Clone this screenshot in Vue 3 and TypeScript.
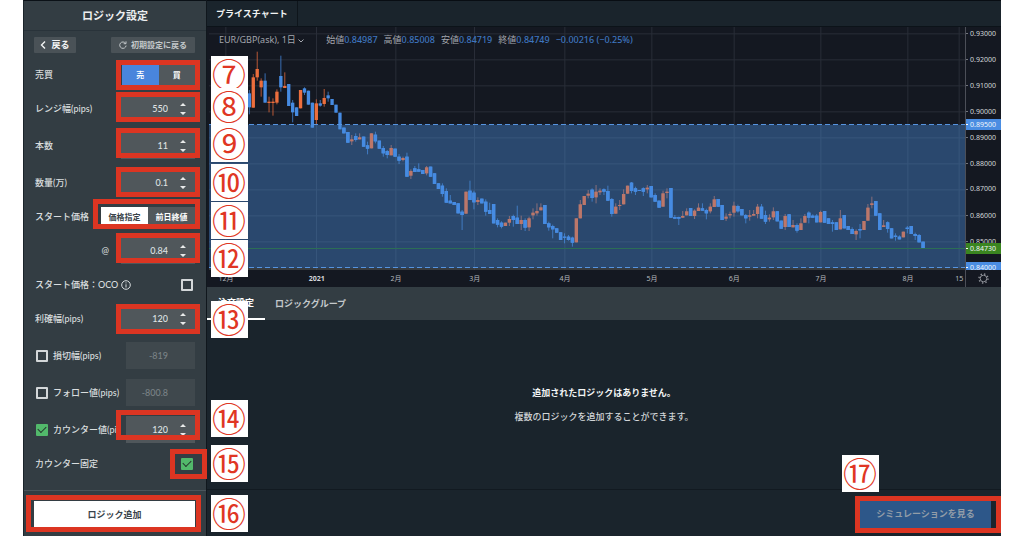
<script setup lang="ts">
import { ref } from 'vue'

type Candle = { x: number; up: boolean; top: number; height: number; high: number; low: number }

const side = ref<'sell' | 'buy'>('sell')
const startMode = ref<'price' | 'close'>('price')
const range = ref('550')
const count = ref('11')
const amount = ref('0.1')
const startPrice = ref('0.84')
const profit = ref('120')
const lossCut = ref('-819')
const follow = ref('-800.8')
const counter = ref('120')
const oco = ref(false)
const useLossCut = ref(false)
const useFollow = ref(false)
const useCounter = ref(true)
const counterFixed = ref(true)

// Plot units: three per pixel. Each candle is direction, body top, body bottom, then optional high and low.
const plot = { left: 12, top: 81, width: 2268, height: 729 }
const series = `
d280,322,270,343 u232,323,222 u207,232,155,242 u242,262,235,290 d242,308,220 u305,309,290,337 u305,309,295,347 u275,308,268,313
d228,262,167,275 u258,264,217 d252,318 d308,337,300,367 d322,348 u270,325 d265,278,262,285 d272,314 d308,383 u310,360,298,375
d310,317,300,320 u294,312,267,320 d286,295,275,305 d297,315 d314,338 d338,388 d383,400 d396,428 u418,424,405,435 d408,420,400,425
u412,418,400 d410,440 d436,446,425,463 u400,445 d404,424,395,430 d422,446 d444,460,438,470 d453,465,450,475 u444,466,435 d446,470
d470,482,462,492 u474,480,470,484 d470,530,458 u513,527,508,537 d505,516,498 d508,515,490 d510,522 u502,520,498,526 d500,530
d520,552 d550,567 d557,582,550,590 d573,608,565 d602,610,585 d606,615 d610,640 d635,645,630,690 u575,641 d572,600,542 d578,607,572,628
u600,606,592,615 d596,610 d605,635,598,647 d630,642,608 d612,670 d660,674,655,682 d668,680,664,685 u668,678 u657,668,648,678 d648,660,644,680
d653,672,617 u660,672,647,690 d660,683,655,693 u655,682,650,693 u638,646,625,658 u633,640,610,647 u622,631,610 d615,672 d670,682,665,692
d678,688,674,715 d685,698 d697,720 d710,713,700,730 d710,720,705,722 d713,728,710,740 u655,727 u613,655,600 u588,615 u581,587,570,595
d569,594,565,605 u575,592,555,610 u572,577,565,585 d568,575,565,585 d573,602,557 d597,642,594,650 u620,641,610 u615,618,600,630
u582,613,568 u557,581 d548,573,546,580 d565,575,560,585 d570,573 d565,575,562,588 u563,568,555,580 d558,592 d585,605,580 d602,623
u580,620,572 u575,579,565,595 d564,653 d651,656,645 d651,656,650,675 u648,653,633 u634,646,625 d624,648 u632,648,628,657 u623,633,610
d625,632,610 d630,640,626,658 u620,634,610,640 u598,621,588 d597,620 d615,660 u650,656,640,663 u642,646,635,655 u617,638,605,650
d618,634,614,638 d627,646 d645,655,642,670 u646,650,630,662 u642,647,630 u620,642,612,655 d620,656,612 d645,665,632,672 u653,658,643,665
u634,652,622,660 d634,664 d662,686 u648,681,642,690 d643,681 u675,682,660 d675,692,670,698 u670,690,655 u648,668,642 d638,653,634,670
d647,653,643 d647,667,642 u636,667,632 d633,668 d655,672 d667,672,660,695 d667,690 u655,688,630 d645,685 d678,690 d687,702,682
u693,703,688,720 d687,691,672,715 u663,690 u623,662,612 u610,615,590,625 d603,647 d640,690 u676,681,660 d667,687,664,698 d685,715
d707,711,700,722 d710,718,706 u695,712 d683,687,678,700 d678,702 d702,708,698,720 d705,727,702 d725,746`
const candles: Candle[] = series.trim().split(/\s+/).map((entry, index) => {
  const [top, bottom, high = top, low = bottom] = entry.slice(1).split(',').map(Number)
  return { x: 133 + index * 11.82, up: entry[0] === 'u', top, height: bottom - top, high, low }
})

const prices = ['0.93000', '0.92000', '0.91000', '0.90000', '0.89000', '0.88000', '0.87000', '0.86000', '0.85000']
const priceY = (value: number) => 102 + (0.93 - value) * 7800
const priceTop = (value: number) => ({ top: `${((priceY(value) - plot.top) / plot.height) * 100}%` })
const months = [
  { x: 63, text: '12月' }, { x: 335, text: '2021', strong: true }, { x: 573, text: '2月' }, { x: 809, text: '3月' },
  { x: 1080, text: '4月' }, { x: 1341, text: '5月' }, { x: 1588, text: '6月' }, { x: 1848, text: '7月' },
  { x: 2109, text: '8月' }, { x: 2263, text: '15' },
]
const monthLeft = (x: number) => ({ left: `${((x - plot.left) / plot.width) * 100}%` })

const tags = [
  { value: 0.895, text: '0.89500', kind: 'level' },
  { value: 0.84, text: '0.84000', kind: 'level' },
  { value: 0.8473, text: '0.84730', kind: 'current' },
]

const frames = [
  { left: 93, top: 60, width: 84, height: 30 },
  { left: 93, top: 92, width: 84, height: 30 },
  { left: 93, top: 128, width: 84, height: 30 },
  { left: 93, top: 167, width: 84, height: 30 },
  { left: 70, top: 199, width: 107, height: 30 },
  { left: 93, top: 233, width: 84, height: 30 },
  { left: 93, top: 304, width: 84, height: 30 },
  { left: 93, top: 410, width: 84, height: 30 },
  { left: 147, top: 449, width: 37, height: 30 },
  { left: 3, top: 495, width: 175, height: 37 },
]
const marks = [
  { text: '⑦', top: 56 }, { text: '⑧', top: 88 }, { text: '⑨', top: 125 }, { text: '⑩', top: 164 },
  { text: '⑪', top: 202 }, { text: '⑫', top: 240 }, { text: '⑬', top: 301 }, { text: '⑭', top: 400 },
  { text: '⑮', top: 445 }, { text: '⑯', top: 495 },
]
const px = (box: Record<string, number>) =>
  Object.fromEntries(Object.entries(box).map(([key, value]) => [key, `${value}px`]))
</script>

<template>
  <div class="app">
    <aside class="sidebar">
      <h1 class="title">ロジック設定</h1>
      <div class="toolbar">
        <button type="button" class="tool back">
          <svg width="6" height="8" viewBox="0 0 6 8"><path d="M5 .5 1.5 4 5 7.5" /></svg>戻る
        </button>
        <button type="button" class="tool reset">
          <svg width="8" height="8" viewBox="0 0 8 8"><path d="M6.6 2.4A3.2 3.2 0 1 0 7.1 4.6M7 .4V2.7H4.7" /></svg>初期設定に戻る
        </button>
      </div>

      <div class="row short">
        <span>売買</span>
        <div class="toggle">
          <button type="button" :class="{ sell: side === 'sell' }" @click="side = 'sell'">売</button>
          <button type="button" :class="{ sell: side === 'buy' }" @click="side = 'buy'">買</button>
        </div>
      </div>
      <div class="row">
        <label for="range">レンジ幅(pips)</label>
        <div class="number"><input id="range" v-model="range" type="number" step="any" /><svg width="6" height="12" viewBox="0 0 6 12"><path d="M0 3 3 0 6 3ZM0 9 3 12 6 9Z" /></svg></div>
      </div>
      <div class="row">
        <label for="count">本数</label>
        <div class="number"><input id="count" v-model="count" type="number" /><svg width="6" height="12" viewBox="0 0 6 12"><path d="M0 3 3 0 6 3ZM0 9 3 12 6 9Z" /></svg></div>
      </div>
      <div class="row">
        <label for="amount">数量(万)</label>
        <div class="number"><input id="amount" v-model="amount" type="number" step="any" /><svg width="6" height="12" viewBox="0 0 6 12"><path d="M0 3 3 0 6 3ZM0 9 3 12 6 9Z" /></svg></div>
      </div>
      <div class="row short">
        <span>スタート価格</span>
        <div class="toggle wide">
          <button type="button" :class="{ picked: startMode === 'price' }" @click="startMode = 'price'">価格指定</button>
          <button type="button" :class="{ picked: startMode === 'close' }" @click="startMode = 'close'">前日終値</button>
        </div>
      </div>
      <div class="row at">
        <label for="start">@</label>
        <div class="number"><input id="start" v-model="startPrice" type="number" step="any" /><svg width="6" height="12" viewBox="0 0 6 12"><path d="M0 3 3 0 6 3ZM0 9 3 12 6 9Z" /></svg></div>
      </div>
      <div class="row short">
        <label for="oco" class="info">スタート価格：OCO
          <svg width="10" height="10" viewBox="0 0 10 10"><circle cx="5" cy="5" r="4.3" /><path d="M5 4.3V7.5M5 2.4V3.4" /></svg>
        </label>
        <input id="oco" v-model="oco" type="checkbox" class="check edge" />
      </div>
      <div class="row">
        <label for="profit">利確幅(pips)</label>
        <div class="number"><input id="profit" v-model="profit" type="number" step="any" /><svg width="6" height="12" viewBox="0 0 6 12"><path d="M0 3 3 0 6 3ZM0 9 3 12 6 9Z" /></svg></div>
      </div>
      <div class="row">
        <label class="option"><input v-model="useLossCut" type="checkbox" class="check" />損切幅(pips)</label>
        <div class="number small off"><input v-model="lossCut" type="number" step="any" :disabled="!useLossCut" aria-label="損切幅(pips)" /></div>
      </div>
      <div class="row">
        <label class="option"><input v-model="useFollow" type="checkbox" class="check" />フォロー値(pips)</label>
        <div class="number small off"><input v-model="follow" type="number" step="any" :disabled="!useFollow" aria-label="フォロー値(pips)" /></div>
      </div>
      <div class="row">
        <label class="option"><input v-model="useCounter" type="checkbox" class="check" />カウンター値(pips)</label>
        <div class="number small"><input v-model="counter" type="number" step="any" :disabled="!useCounter" aria-label="カウンター値(pips)" /><svg width="6" height="12" viewBox="0 0 6 12"><path d="M0 3 3 0 6 3ZM0 9 3 12 6 9Z" /></svg></div>
      </div>
      <div class="row short">
        <label for="fixed">カウンター固定</label>
        <input id="fixed" v-model="counterFixed" type="checkbox" class="check edge" />
      </div>
      <div class="add-area"><button type="button" class="add">ロジック追加</button></div>
    </aside>

    <main class="main">
      <nav class="top-tabs"><button type="button">プライスチャート</button></nav>

      <section class="chart">
        <div class="plot">
          <svg class="canvas" :viewBox="`${plot.left} ${plot.top} ${plot.width} ${plot.height}`" preserveAspectRatio="none">
            <g class="grid">
              <rect v-for="p in prices" :key="p" x="12" :y="priceY(Number(p)) - 2" width="2268" height="3" />
              <rect v-for="m in months" :key="m.text" :x="m.x - 2" y="81" width="3" height="729" />
            </g>
            <g v-for="c in candles" :key="c.x" :class="c.up ? 'up' : 'down'">
              <rect :x="c.x - 1.5" :y="c.high" width="3" :height="c.low - c.high" opacity=".75" />
              <rect :x="c.x - 5" :y="c.top" width="10" :height="c.height" />
            </g>
            <rect class="zone" x="12" y="374" width="2268" height="430" />
            <template v-for="c in candles" :key="c.x">
              <rect v-if="c.top > 374" :class="c.up ? 'up faint' : 'down'" :x="c.x - 5" :y="c.top" width="10" :height="c.height" />
            </template>
            <path class="level" d="M12 373.5H2280M12 802.5H2280" />
            <path class="current" d="M12 745.5H2280" />
            <path class="base" d="M12 807H2280" />
          </svg>
          <div class="legend">
            <span class="symbol">EUR/GBP(ask), 1日
              <svg width="6" height="4" viewBox="0 0 6 4"><path d="M.5 .5 3 3 5.5 .5" /></svg>
            </span>
            <span>始値<b>0.84987</b></span><span>高値<b>0.85008</b></span><span>安値<b>0.84719</b></span><span>終値<b>0.84749</b></span>
            <b class="change">−0.00216 (−0.25%)</b>
          </div>
        </div>
        <div class="price-axis">
          <span v-for="p in prices" :key="p" class="price" :style="priceTop(Number(p))">{{ p }}</span>
          <span v-for="t in tags" :key="t.text" class="price tag" :class="t.kind" :style="priceTop(t.value)">{{ t.text }}</span>
        </div>
        <div class="time-axis">
          <span v-for="m in months" :key="m.text" :class="{ strong: m.strong }" :style="monthLeft(m.x)">{{ m.text }}</span>
        </div>
        <button type="button" class="gear" aria-label="設定">
          <svg width="11" height="11" viewBox="0 0 11 11"><circle cx="5.5" cy="5.5" r="3.3" /><circle cx="5.5" cy="5.5" r="4.5" class="teeth" /></svg>
        </button>
      </section>

      <nav class="tabs">
        <button type="button" class="active">注文設定</button>
        <button type="button">ロジックグループ</button>
      </nav>
      <section class="empty">
        <p class="lead">追加されたロジックはありません。</p>
        <p>複数のロジックを追加することができます。</p>
      </section>
      <footer class="footer">
        <button type="button" class="simulate">シミュレーションを見る</button>
        <i class="frame sim-frame"></i>
        <span class="mark sim-mark">⑰</span>
      </footer>
    </main>

    <i v-for="(f, i) in frames" :key="i" class="frame" :style="px(f)"></i>
    <span v-for="m in marks" :key="m.text" class="mark" :style="px({ top: m.top })">{{ m.text }}</span>
  </div>
</template>

<style>
body {
  background: #fff;
}
</style>

<style scoped>
.app {
  position: relative;
  display: flex;
  gap: 1px;
  box-sizing: border-box;
  min-height: 100vh;
  margin: 0 23px;
  background: #10171d;
  color: #d9dddf;
  font: 9px/12px Lato, "Noto Sans CJK JP", sans-serif;
}
.app *,
.app *::after {
  box-sizing: border-box;
}
button,
input {
  margin: 0;
  padding: 0;
  border: 0;
  border-radius: 0;
  color: inherit;
  font: inherit;
}
button {
  background: none;
  white-space: nowrap;
  cursor: pointer;
}
svg {
  flex: none;
  fill: none;
  stroke: currentColor;
}
.sidebar {
  display: flex;
  flex-direction: column;
  flex: none;
  width: 183px;
  border-top: 1px solid #0b1117;
  border-left: 1px solid #1b242a;
  background: #333d43;
}
.title {
  height: 30px;
  margin: 0;
  border-bottom: 1px solid #29333a;
  color: #eceeef;
  font-size: 11px;
  line-height: 30px;
  text-align: center;
}
.toolbar {
  display: flex;
  justify-content: space-between;
  align-items: center;
  height: 28px;
  padding: 0 11px 0 10px;
}
.tool {
  display: flex;
  justify-content: center;
  align-items: center;
  height: 16px;
  border-radius: 1px;
  background: #4a5257;
  font-weight: bold;
}
.back {
  gap: 5px;
  width: 42px;
  color: #f3f4f4;
}
.back svg {
  stroke-width: 1.4;
}
.reset {
  gap: 4px;
  width: 84px;
  color: #c3c8ca;
  font-size: 8px;
}
.row {
  display: flex;
  justify-content: space-between;
  align-items: center;
  height: 37px;
  padding: 0 11px;
  white-space: nowrap;
  font-weight: 500;
}
.row.short {
  height: 31px;
}
.row.at {
  justify-content: flex-end;
  gap: 12px;
}
.toggle {
  display: grid;
  grid-template-columns: 1fr 1fr;
  width: 73px;
  height: 20px;
  background: #51585c;
  color: #fff;
  font-size: 8px;
  font-weight: bold;
}
.toggle.wide {
  width: 94px;
}
.sell {
  background: #4985dc;
}
.picked {
  background: #fff;
  color: #394349;
}
.number {
  display: flex;
  align-items: center;
  width: 74px;
  height: 27px;
  padding-right: 9px;
  background: #50575b;
  color: #dfe2e3;
}
.number.small {
  width: 69px;
}
.number input {
  width: 100%;
  min-width: 0;
  height: 100%;
  margin-right: 12px;
  background: none;
  text-align: right;
  appearance: textfield;
}
.number input::-webkit-inner-spin-button {
  display: none;
}
.number svg {
  fill: #e8eaea;
  stroke: none;
}
.number.off {
  padding-right: 15px;
  background: #3f484d;
  color: #7a8286;
}
.info {
  display: flex;
  align-items: center;
  gap: 3px;
}
.option {
  display: flex;
  align-items: center;
  gap: 5px;
  width: 85px;
  padding-left: 1px;
  overflow: hidden;
}
.check {
  flex: none;
  display: grid;
  place-items: center;
  width: 12px;
  height: 12px;
  border: 2px solid #d3d7d9;
  border-radius: 1px;
  appearance: none;
}
.check.edge {
  margin-right: 2px;
}
.check:checked {
  border: 0;
  background: #52b96b;
}
.check:checked::after {
  content: "";
  width: 8px;
  height: 5px;
  margin-bottom: 3px;
  border: solid #25352d;
  border-width: 0 0 1px 1px;
  transform: rotate(-45deg);
}
.add-area {
  display: flex;
  align-items: center;
  height: 46px;
  margin-top: auto;
  padding: 2px 11px 0 10px;
  border-top: 1px solid #4b555b;
}
.add {
  flex: 1;
  height: 27px;
  background: #fff;
  color: #39434a;
  font-weight: bold;
}
.main {
  display: flex;
  flex-direction: column;
  flex: 1;
  min-width: 0;
  border-top: 1px solid #080d13;
  background: #1a242c;
}
.top-tabs {
  height: 26px;
  border-bottom: 1px solid #0c1319;
}
.top-tabs button {
  height: 25px;
  padding: 0 9px;
  border-right: 1px solid #0e151b;
  color: #f2f4f4;
  font-weight: bold;
}
.chart {
  display: grid;
  grid-template: 243px 17px / minmax(0, 1fr) 36px;
  padding-left: 2px;
  background: #141821;
  font: 7px/10px "Noto Sans", "Noto Sans CJK JP", sans-serif;
}
.plot {
  position: relative;
}
.canvas {
  display: block;
  width: 100%;
  height: 100%;
  stroke: none;
}
.grid {
  fill: #292d38;
}
.up {
  fill: #ec6e3d;
}
.up.faint {
  opacity: 0.3;
}
.down {
  fill: #468be2;
}
.zone {
  fill: #4a8dd8;
  fill-opacity: 0.42;
}
.level {
  stroke: #5694e0;
  stroke-width: 3;
  stroke-dasharray: 15 9;
}
.current {
  stroke: #2c6e55;
  stroke-width: 3;
}
.base {
  stroke: #5b5e5f;
  stroke-width: 3;
}
.legend {
  position: absolute;
  top: 7px;
  left: 10px;
  display: flex;
  align-items: center;
  gap: 6px;
  color: #a3a6ad;
  font-size: 9px;
  line-height: 12px;
  white-space: nowrap;
}
.legend b {
  color: #3e75bf;
  font-weight: 500;
}
.symbol {
  margin-right: 16px;
}
.symbol svg {
  vertical-align: middle;
}
.price-axis {
  position: relative;
  overflow: hidden;
  border-left: 1px solid #4c4f58;
  color: #d3d5d9;
}
.price {
  position: absolute;
  left: 0;
  right: 0;
  display: flex;
  align-items: center;
  gap: 2px;
  height: 11px;
  margin-top: -6px;
}
.price::before {
  content: "";
  width: 2px;
  height: 1px;
  background: #70737b;
}
.tag {
  color: #f0f5fb;
}
.tag::before {
  background: #fff;
}
.tag.level {
  background: #4a8de2;
}
.tag.current {
  background: #3a8520;
}
.time-axis {
  position: relative;
  color: #b5b8be;
}
.time-axis span {
  position: absolute;
  top: 4px;
  transform: translateX(-50%);
  white-space: nowrap;
}
.time-axis .strong {
  color: #d5d7da;
  font-weight: bold;
}
.gear {
  display: grid;
  place-items: center;
  border-left: 1px solid #4c4f58;
  color: #8d9097;
}
.teeth {
  stroke-width: 1.4;
  stroke-dasharray: 1.4 2.134;
}
.tabs {
  display: flex;
  height: 33px;
  background: #333d43;
  color: #c4c9cc;
}
.tabs button {
  padding: 0 10px;
  font-weight: bold;
}
.tabs .active {
  width: 58px;
  border-bottom: 2px solid #fff;
  color: #fff;
}
.empty {
  display: flex;
  flex: 1;
  flex-direction: column;
  justify-content: center;
  align-items: center;
  gap: 12px;
  color: #d2d6d8;
}
.empty p {
  margin: 0;
  font-weight: 500;
}
.empty .lead {
  color: #f3f5f5;
  font-weight: bold;
}
.footer {
  position: relative;
  display: flex;
  justify-content: flex-end;
  align-items: center;
  height: 47px;
  padding: 2px 10px 0 0;
  border-top: 1px solid #121a21;
}
.simulate {
  width: 131px;
  height: 27px;
  background: #2d5789;
  color: #929da8;
  font-weight: bold;
}
.frame {
  position: absolute;
  border: 5px solid #dc3522;
  pointer-events: none;
}
.mark {
  position: absolute;
  left: 188px;
  display: grid;
  place-items: center;
  width: 37px;
  height: 37px;
  background: #fff;
  color: #e03623;
  font: 34px/34px "Noto Sans CJK JP", sans-serif;
  padding: 0 1px 2px 0;
}
.sim-frame {
  right: 0;
  top: 6px;
  width: 146px;
  height: 37px;
}
.sim-mark {
  right: 122px;
  bottom: 44px;
  left: auto;
}
</style>
